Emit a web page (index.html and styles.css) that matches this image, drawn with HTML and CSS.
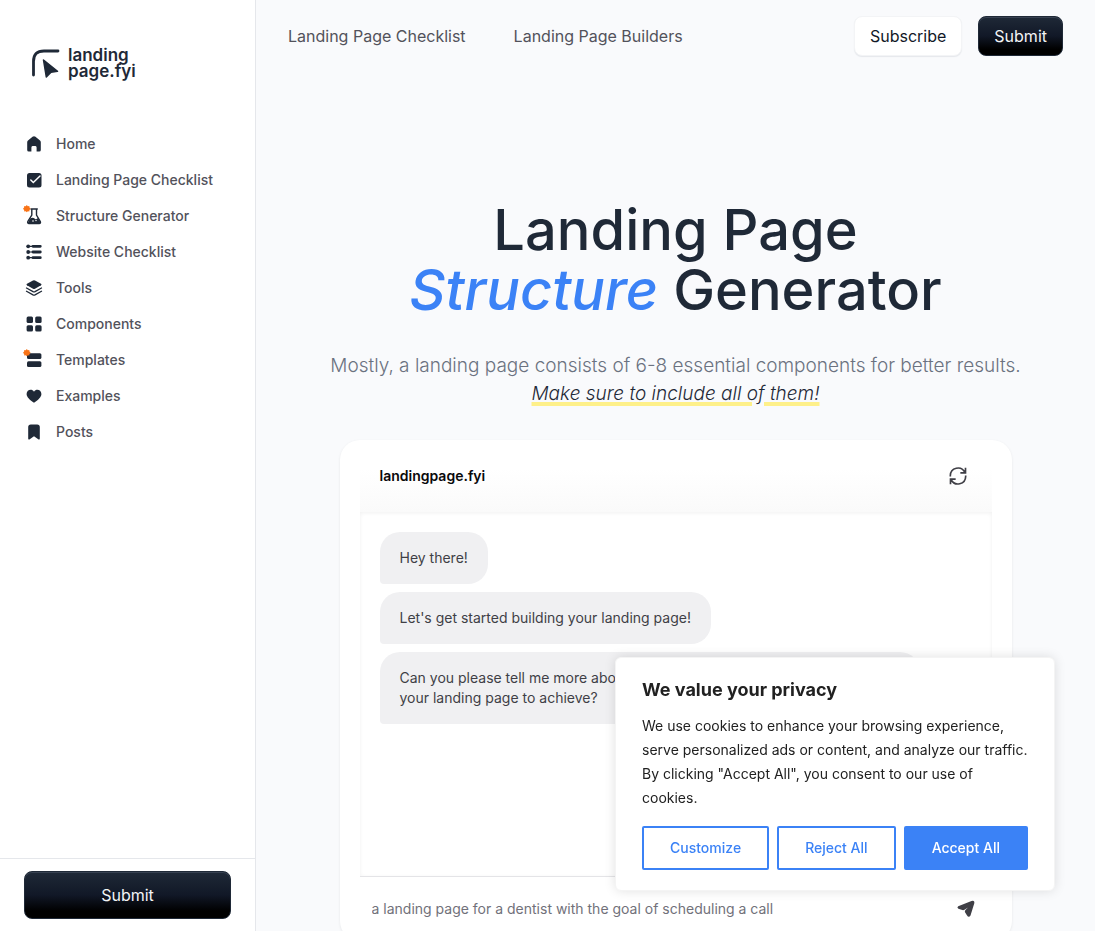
FILE: index.html
```html
<!DOCTYPE html>
<html lang="en">
<head>
<meta charset="utf-8">
<meta name="viewport" content="width=device-width, initial-scale=1">
<title>Landing Page Structure Generator</title>
<link rel="stylesheet" href="styles.css">
</head>
<body>
<div class="layout">
  <aside class="sidebar">
    <a class="logo" href="#">
      <svg class="logo-mark" viewBox="0 0 28 30" aria-hidden="true"><path d="M1.500 27V13.500Q1.500 3 12 3H26" fill="none" stroke="#1f2937" stroke-width="2.800" stroke-linecap="round"/><path d="M11.500 12 25.500 23.300 19 24.200 14.300 29Z" fill="#1f2937" stroke="#1f2937" stroke-width="1.500" stroke-linejoin="round"/></svg>
      <span class="logo-text">landing<br>page.fyi</span>
    </a>
    <nav class="side-nav">
      <a href="#"><svg viewBox="0 0 20 20"><path d="M3.200 8.200Q3.200 7.300 4 6.500L8.500 2.700Q10 1.600 11.500 2.700L16 6.500Q16.800 7.300 16.800 8.200V16Q16.800 17.600 15.200 17.600H12.600V13.500Q12.600 12 11.500 12H8.500Q7.400 12 7.400 13.500V17.600H4.800Q3.200 17.600 3.200 16Z"/></svg>Home</a>
      <a href="#"><svg viewBox="0 0 20 20"><rect x="3" y="3" width="14.500" height="14.500" rx="2.500"/><path d="m6.800 10 2.500 2.500 6.700-6.500" fill="none" stroke="#fff" stroke-width="1.500" stroke-linecap="round"/></svg>Landing Page Checklist</a>
      <a href="#"><svg viewBox="0 0 20 20"><path d="M6.500 3h7.300M7.800 3v6L3.800 15.500Q3.200 17.500 5 17.500H15.200Q17 17.500 16.300 15.500L12.500 9V3" fill="none" stroke="#1f2937" stroke-width="1.400"/><path d="M6 12.500 4 16.500Q4 17.500 5 17.500H15Q16.800 17.500 16 15.500L14 12Q12 14 10.500 12.500T6 12.500Z"/><circle cx="9" cy="15" r=".8" fill="#fff"/><circle cx="12" cy="14.500" r=".7" fill="#fff"/><path class="spark" d="m2.800-.9 1 1.100 1.500-.1.200 1.400 1.100 1.300-1.100 1.200-.2 1.400-1.500-.1-1 1-1-1-1.500.1-.2-1.400-1.100-1.200L.1 1.500.3.100l1.500.1Z"/></svg>Structure Generator</a>
      <a href="#"><svg viewBox="0 0 20 20"><path d="M9 4.300h7.300M9 10h7.300M9 15.700h7.300" fill="none" stroke="#1f2937" stroke-width="2.800" stroke-linecap="round"/><path d="M3 4.300h13M3 10h13M3 15.700h13" stroke="#1f2937" stroke-width="1.200"/><circle cx="4.200" cy="4.300" r="1.900"/><circle cx="4.200" cy="10" r="1.900"/><circle cx="4.200" cy="15.700" r="1.900"/></svg>Website Checklist</a>
      <a href="#"><svg viewBox="0 0 20 20"><path d="M9 2.600q1-.5 2 0l6 3.200q1.200.7 0 1.500l-6 3.400q-1 .5-2 0L3 7.300q-1.200-.8 0-1.500Z"/><path d="m2.500 10 6.500 3.600q1 .5 2 0l6.500-3.600M2.500 13.300 9 16.900q1 .5 2 0l6.500-3.600" fill="none" stroke="#1f2937" stroke-width="1.300" stroke-linecap="round"/></svg>Tools</a>
      <a href="#"><svg viewBox="0 0 20 20"><rect x="2.600" y="2.600" width="6.400" height="6.400" rx="1.500"/><rect x="11.200" y="2.600" width="6.400" height="6.400" rx="1.500"/><rect x="2.600" y="11.200" width="6.400" height="6.400" rx="1.500"/><rect x="11.200" y="11.200" width="6.400" height="6.400" rx="1.500"/></svg>Components</a>
      <a href="#"><svg viewBox="0 0 20 20"><rect x="3" y="3.200" width="14.400" height="5.800" rx="1.500"/><rect x="3" y="11.200" width="14.400" height="5.800" rx="1.500"/><path class="spark" d="m2.800-.9 1 1.100 1.500-.1.200 1.400 1.100 1.300-1.100 1.200-.2 1.400-1.500-.1-1 1-1-1-1.500.1-.2-1.400-1.100-1.200L.1 1.500.3.100l1.500.1Z"/></svg>Templates</a>
      <a href="#"><svg viewBox="0 0 20 20"><path d="M10 16.700C6 14 2.600 11.300 2.600 8c0-4.300 5.300-5.600 7.400-2.300C12.100 2.400 17.400 3.700 17.400 8c0 3.300-3.400 6-7.400 8.700Z"/></svg>Examples</a>
      <a href="#"><svg viewBox="0 0 20 20"><path d="M4.200 5q0-2.600 2.600-2.600h6.400q2.600 0 2.600 2.600v11.600q0 1.500-1.200.8L10 14.300l-4.600 3.100q-1.200.7-1.200-.8Z"/></svg>Posts</a>
    </nav>
    <div class="side-foot"><button class="btn-dark btn-wide" type="button">Submit</button></div>
  </aside>

  <main class="main">
    <header class="topbar">
      <nav class="top-nav"><a href="#">Landing Page Checklist</a><a href="#">Landing Page Builders</a></nav>
      <div class="top-actions"><button class="btn-light" type="button">Subscribe</button><button class="btn-dark" type="button">Submit</button></div>
    </header>
    <section class="hero">
      <h1>Landing Page<br><em>Structure</em> Generator</h1>
      <p>Mostly, a landing page consists of 6-8 essential components for better results. <em>Make sure to include all of them!</em></p>
    </section>
    <section class="chat">
      <div class="chat-head">
        <h2>landingpage.fyi</h2>
        <button class="icon-btn" type="button" aria-label="Restart"><svg viewBox="0 0 24 24" fill="none" stroke="#3f3f46" stroke-width="2" stroke-linecap="square"><path d="M2.800 11.500A9.200 9.200 0 0 1 20.200 7.500M21.200 12.500A9.200 9.200 0 0 1 3.800 16.500M21 3v5.200h-5.200M3 21v-5.200h5.200"/></svg></button>
      </div>
      <div class="chat-log">
        <p>Hey there!</p>
        <p>Let's get started building your landing page!</p>
        <p>Can you please tell me more about your business and what do you want your landing page to achieve?</p>
      </div>
      <form class="chat-form">
        <input type="text" aria-label="Message" placeholder="a landing page for a dentist with the goal of scheduling a call">
        <button class="icon-btn" type="button" aria-label="Send"><svg viewBox="0 0 20 20"><path d="M2.200 7.200 15.500 1.900Q18.800.800 18.300 4.300L14.500 16.500Q12.800 19.300 10.900 16.300L9 13.300Q8.300 11.800 9.700 10.700L12 8.400 8.500 10.700Q7.500 11.400 6.300 11L2.400 9.700Q.500 8.500 2.200 7.200Z" fill="#3f3f46"/></svg></button>
      </form>
    </section>
  </main>
</div>

<div class="consent" role="dialog" aria-labelledby="consent-title">
  <h2 id="consent-title">We value your privacy</h2>
  <p>We use cookies to enhance your browsing experience, serve personalized ads or content, and analyze our traffic. By clicking "Accept All", you consent to our use of cookies.</p>
  <div class="consent-actions">
    <button type="button">Customize</button>
    <button type="button">Reject All</button>
    <button class="primary" type="button">Accept All</button>
  </div>
</div>
</body>
</html>
```
FILE: styles.css
```css
* { box-sizing: border-box; }
body {
  margin: 0;
  background: #f9fafc;
  color: #1f2937;
  font-family: Inter, "Liberation Sans", sans-serif;
  font-size: 16px;
  line-height: 24px;
}
h1, h2, p { margin: 0; }
a { color: inherit; text-decoration: none; }
button, input { font: inherit; }
button { cursor: pointer; }

.layout { display: flex; height: 100vh; }

/* Sidebar */
.sidebar {
  display: flex;
  flex-direction: column;
  flex: 0 0 256px;
  background: #fff;
  border-right: 1px solid #e5e7eb;
}
.logo { display: flex; align-items: center; gap: 8px; padding: 47px 32px 0; }
.logo-mark { width: 28px; height: 30px; }
.logo-text { font-size: 17px; font-weight: 600; line-height: 16px; }
.side-nav { display: flex; flex-direction: column; flex: 1; padding: 47px 24px 0; }
.side-nav a {
  display: flex;
  align-items: center;
  gap: 12px;
  height: 36px;
  color: #52525b;
  font-size: 14px;
  font-weight: 500;
}
.side-nav svg { width: 20px; height: 20px; overflow: visible; fill: #1f2937; }
.side-nav .spark { fill: #f97316; }
.side-foot { padding: 12px 24px; border-top: 1px solid #e5e7eb; }

/* Buttons */
.btn-dark, .btn-light { height: 40px; padding: 0 15px; border-radius: 8px; }
.btn-dark {
  border: 1px solid #1f2937;
  background: linear-gradient(#1f2937, #111827 50%, #000 85%);
  box-shadow: inset 0 1px 0 #374151;
  color: #f3f4f6;
}
.btn-light {
  border: 1px solid #f3f4f6;
  background: #fff;
  box-shadow: 0 1px 1px #e5e7eb;
  color: #111827;
}
.btn-wide { display: block; width: 100%; height: 48px; }
.icon-btn { display: flex; padding: 0; border: 0; background: none; }
.icon-btn svg { width: 20px; height: 20px; }

/* Main column */
.main { flex: 1; min-width: 0; overflow-y: auto; scrollbar-width: none; }
.topbar { display: flex; align-items: center; justify-content: space-between; padding: 16px 32px; }
.top-nav { display: flex; gap: 48px; color: #52525b; }
.top-actions { display: flex; gap: 16px; }
.hero { max-width: 768px; margin: 128px auto 0; padding: 0 24px; text-align: center; }
.hero h1 { font-size: 56px; font-weight: 500; line-height: 60px; }
.hero h1 em { color: #3b82f6; }
.hero p { margin-top: 32px; color: #6b7280; font-size: 19px; font-weight: 300; line-height: 28px; }
.hero p em {
  display: inline-block;
  color: #1f2937;
  text-decoration: underline #fef08a 4px;
}

/* Chat card */
.chat {
  max-width: 672px;
  margin: 32px auto 40px;
  padding: 0 20px;
  border-radius: 20px;
  background: #fff;
  box-shadow: 0 1px 3px rgb(0 0 0 / 8%);
}
.chat-head {
  display: flex;
  align-items: center;
  justify-content: space-between;
  height: 72px;
  padding: 0 24px 0 20px;
  background: linear-gradient(#fff 40%, #fafafa);
}
.chat-head h2 { color: #09090b; font-size: 14px; font-weight: 600; line-height: 20px; }
.chat-log {
  display: flex;
  flex-direction: column;
  align-items: flex-start;
  gap: 8px;
  min-height: 364px;
  padding: 20px;
  box-shadow: inset 0 1px 4px rgb(0 0 0 / 6%);
}
.chat-log p {
  max-width: 540px;
  padding: 16px 20px;
  border-radius: 20px 20px 20px 4px;
  background: #f0f0f2;
  color: #3f3f46;
  font-size: 14px;
  line-height: 20px;
}
.chat-form {
  display: flex;
  align-items: center;
  height: 65px;
  padding: 0 16px 0 12px;
  border-top: 1px solid #e4e4e7;
  background: #fff;
}
.chat-form input { flex: 1; border: 0; padding: 0; outline: 0; background: none; font-size: 14px; }
.chat-form input::placeholder { color: #71717a; }

/* Cookie notice */
.consent {
  position: fixed;
  right: 40px;
  bottom: 40px;
  width: 440px;
  max-width: calc(100% - 80px);
  padding: 20px 26px;
  border: 1px solid #f4f4f4;
  border-radius: 6px;
  background: #fff;
  box-shadow: 0 0 12px rgb(0 0 0 / 12%);
  color: #212121;
}
.consent h2 { font-size: 18px; font-weight: 700; line-height: 24px; }
.consent p { margin: 12px 0 16px; font-size: 14px; line-height: 24px; }
.consent-actions { display: flex; gap: 8px; }
.consent button {
  flex: 1 1 auto;
  height: 44px;
  padding: 0 24px;
  border: 2px solid #3b82f6;
  border-radius: 2px;
  background: #fff;
  color: #3b82f6;
  font-size: 14px;
  font-weight: 500;
}
.consent .primary { background: #3b82f6; color: #fff; }
```
